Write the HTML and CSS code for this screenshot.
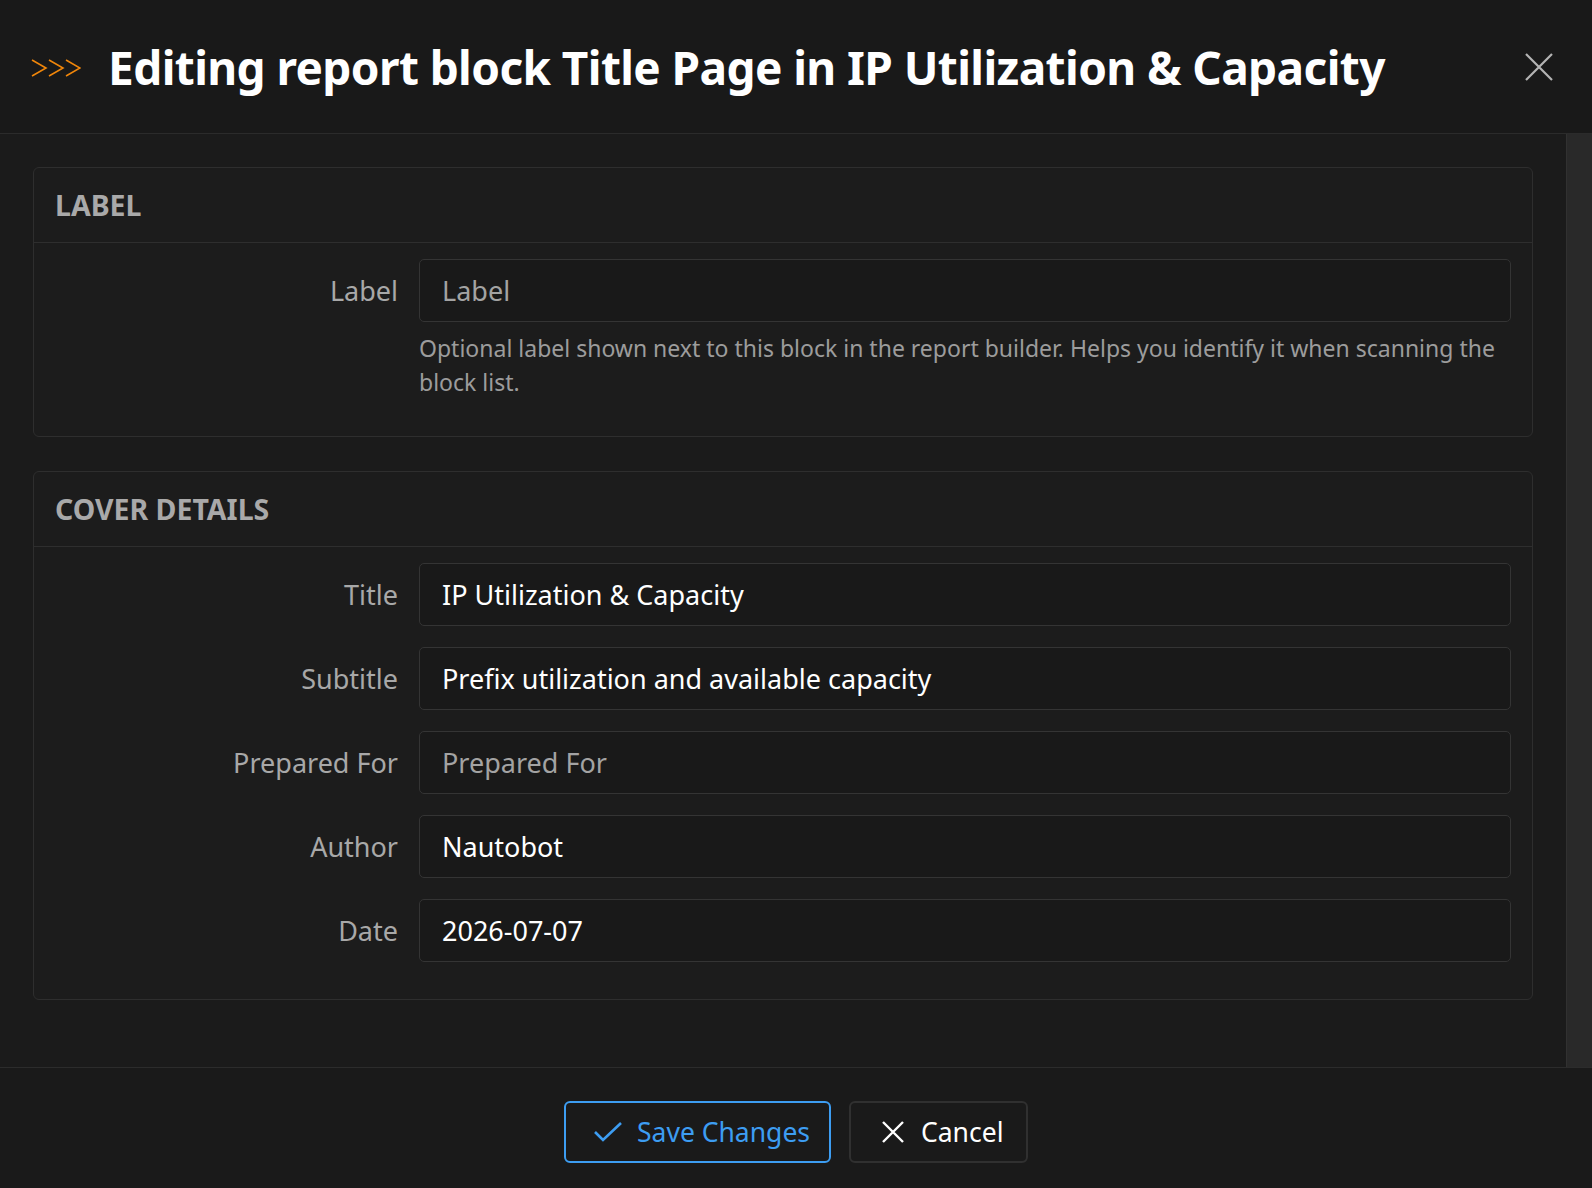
FILE: index.html
```html
<!DOCTYPE html>
<html lang="en">
<head>
<meta charset="utf-8">
<title>Editing report block</title>
<link rel="stylesheet" href="styles.css">
</head>
<body>
<div class="modal">
  <header class="modal-header">
    <svg class="chev" width="50" height="20" viewBox="0 0 50 20" aria-hidden="true">
      <path d="M1 2 L15 10 L1 18 M18 2 L32 10 L18 18 M35 2 L49 10 L35 18" fill="none" stroke="#f0860a" stroke-width="1.6"/>
    </svg>
    <h1 class="modal-title">Editing report block Title Page in IP Utilization &amp; Capacity</h1>
    <button class="close" aria-label="Close">
      <svg width="30" height="30" viewBox="0 0 30 30" aria-hidden="true">
        <path d="M2 2 L28 28 M28 2 L2 28" stroke="#b4b4b4" stroke-width="2.2" fill="none"/>
      </svg>
    </button>
  </header>
  <div class="modal-main">
    <div class="modal-body">
      <section class="card">
        <div class="card-head">LABEL</div>
        <div class="card-body">
          <div class="row">
            <div class="lbl">Label</div>
            <div class="field">
              <div class="input placeholder">Label</div>
              <div class="help">Optional label shown next to this block in the report builder. Helps you identify it when scanning the block list.</div>
            </div>
          </div>
        </div>
      </section>
      <section class="card">
        <div class="card-head">COVER DETAILS</div>
        <div class="card-body">
          <div class="row"><div class="lbl">Title</div><div class="field"><div class="input">IP Utilization &amp; Capacity</div></div></div>
          <div class="row"><div class="lbl">Subtitle</div><div class="field"><div class="input">Prefix utilization and available capacity</div></div></div>
          <div class="row"><div class="lbl">Prepared For</div><div class="field"><div class="input placeholder">Prepared For</div></div></div>
          <div class="row"><div class="lbl">Author</div><div class="field"><div class="input">Nautobot</div></div></div>
          <div class="row"><div class="lbl">Date</div><div class="field"><div class="input">2026-07-07</div></div></div>
        </div>
      </section>
    </div>
    <div class="scrollbar"></div>
  </div>
  <footer class="modal-footer">
    <button class="btn btn-primary">
      <svg width="30" height="24" viewBox="0 0 30 24" aria-hidden="true"><path d="M2 12 L10 20 L28 3" fill="none" stroke="#3d9df2" stroke-width="2.6"/></svg>
      <span>Save Changes</span>
    </button>
    <button class="btn btn-default">
      <svg width="24" height="24" viewBox="0 0 24 24" aria-hidden="true"><path d="M2 2 L22 22 M22 2 L2 22" fill="none" stroke="#ffffff" stroke-width="2.4"/></svg>
      <span>Cancel</span>
    </button>
  </footer>
</div>
</body>
</html>
```
FILE: styles.css
```css
* { box-sizing: border-box; }
html, body { margin: 0; padding: 0; }
body {
  background: #1a1a1a;
  font-family: "Noto Sans", "Open Sans", sans-serif;
  color: #fff;
  width: 1592px;
  height: 1188px;
  overflow: hidden;
}
.modal { display: flex; flex-direction: column; height: 1188px; }
.modal-header {
  height: 134px;
  flex: none;
  background: #191919;
  border-bottom: 1px solid #2b2b2b;
  display: flex;
  align-items: center;
  padding: 0 38px 0 31px;
}
.chev { flex: none; margin-top: 2px; }
.modal-title {
  margin: 0 0 0 27px;
  flex: 1;
  font-size: 46px;
  font-weight: 700;
  letter-spacing: -0.6px;
  color: #fff;
  line-height: 1;
}
.close {
  background: none; border: 0; padding: 0; margin: 0;
  width: 30px; height: 30px; display: flex;
}
.modal-main { flex: none; height: 933px; display: flex; background: #1b1b1b; }
.modal-body { flex: 1; padding: 33px; display: flex; flex-direction: column; gap: 34px; }
.scrollbar { width: 26px; flex: none; background: #292929; border-left: 1px solid #313131; }
.card {
  background: #1c1c1c;
  border: 1px solid #2e2e2e;
  border-radius: 6px;
}
.card-head {
  height: 75px;
  border-bottom: 1px solid #2e2e2e;
  padding: 0 21px;
  display: flex;
  align-items: center;
  font-size: 28.5px;
  font-weight: 700;
  color: #a9a9a9;
}
.card-body { padding: 16px 21px 16px 0; }
.row { display: flex; margin-bottom: 21px; }
.lbl {
  width: 385px;
  flex: none;
  text-align: right;
  padding-right: 21px;
  height: 63px;
  line-height: 63px;
  font-size: 27px;
  color: #a8a8a8;
}
.field { flex: 1; min-width: 0; }
.input {
  height: 63px;
  border: 1px solid #343434;
  border-radius: 5px;
  background: #191919;
  padding: 0 22px;
  display: flex;
  align-items: center;
  font-size: 27px;
  color: #fff;
}
.input.placeholder { color: #a3a3a3; }
.help {
  margin-top: 9px;
  font-size: 23px;
  line-height: 34px;
  color: #9c9c9c;
}
.modal-footer {
  flex: 1;
  background: #1a1a1a;
  border-top: 1px solid #2c2c2c;
  display: flex;
  justify-content: center;
  align-items: flex-start;
  gap: 18px;
  padding-top: 33px;
}
.btn {
  height: 62px;
  border-radius: 6px;
  background: transparent;
  display: flex;
  align-items: center;
  font-family: inherit;
  font-size: 26.5px;
  cursor: pointer;
}
.btn-primary { width: 267px; border: 2px solid #3d9df2; color: #3d9df2; padding: 0 0 0 27px; gap: 14px; }
.btn-default { width: 179px; border: 2px solid #303030; color: #fff; padding: 0 0 0 30px; gap: 16px; }
```
